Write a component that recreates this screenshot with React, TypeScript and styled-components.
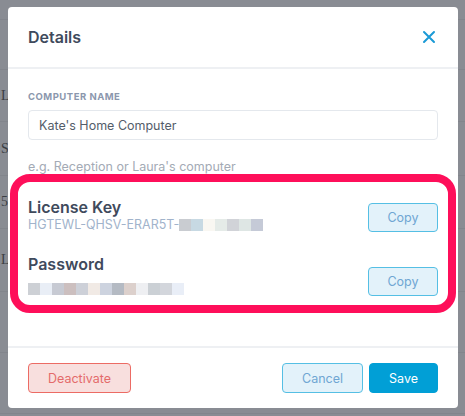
import React from "react";
import styled, { createGlobalStyle } from "styled-components";

const GlobalStyle = createGlobalStyle`
  html, body {
    margin: 0;
    padding: 0;
    width: 465px;
    height: 416px;
    overflow: hidden;
    font-family: Inter, "Noto Sans", Arial, sans-serif;
  }
`;

const Page = styled.div`
  position: relative;
  width: 465px;
  height: 416px;
  background: #898c93;
  overflow: hidden;
`;

const BgRow = styled.div<{ $h: number }>`
  height: ${(p) => p.$h}px;
  border-bottom: 1px solid #82858c;
  display: flex;
  align-items: center;
  font-family: "Liberation Serif", serif;
  font-size: 14px;
  color: #3b3e44;
  padding-left: 1px;
`;

const Modal = styled.div`
  position: absolute;
  left: 8px;
  top: 7px;
  width: 450px;
  height: 401px;
  background: #fff;
  border-radius: 4px;
  display: flex;
  flex-direction: column;
`;

const Header = styled.div`
  height: 60px;
  display: flex;
  align-items: center;
  justify-content: space-between;
  padding: 0 22px 0 20px;
  border-bottom: 2px solid #eef0f3;
  h1 {
    margin: 0;
    font-size: 16px;
    font-weight: 600;
    color: #3f4a5c;
  }
`;

const CloseBtn = styled.button`
  border: 0;
  background: none;
  padding: 0;
  width: 14px;
  height: 14px;
  display: flex;
  cursor: pointer;
`;

const Body = styled.div`
  flex: 1;
  padding: 22px 20px 0 20px;
  display: flex;
  flex-direction: column;
`;

const Label = styled.label`
  font-size: 9.5px;
  font-weight: 700;
  letter-spacing: 0.5px;
  color: #8b97ad;
  text-transform: uppercase;
  margin-bottom: 8px;
`;

const Input = styled.input`
  height: 30px;
  box-sizing: border-box;
  border: 1px solid #e4e8ed;
  border-radius: 4px;
  padding: 0 10px;
  font-family: inherit;
  font-size: 12.5px;
  color: #545d6a;
  outline: none;
`;

const Hint = styled.div`
  margin-top: 19px;
  font-size: 12.5px;
  color: #a3aab5;
`;

const Highlight = styled.div`
  margin: 0 -18px 0 -18px;
  border: 8px solid #fe0f5a;
  border-radius: 20px;
  padding: 15px 10px 9px 10px;
  display: flex;
  flex-direction: column;
  gap: 22px;
`;

const SecretRow = styled.div`
  display: flex;
  align-items: flex-end;
  justify-content: space-between;
`;

const SecretInfo = styled.div`
  display: flex;
  flex-direction: column;
`;

const SecretTitle = styled.div`
  font-size: 16px;
  font-weight: 600;
  color: #3f4a5c;
  line-height: 20px;
`;

const SecretValue = styled.div<{ $offset?: number }>`
  display: flex;
  align-items: center;
  height: 15px;
  margin-top: ${(p) => p.$offset ?? 0}px;
  font-size: 12.5px;
  color: #a1b3cb;
`;

const Pixel = styled.span<{ $c: string }>`
  display: inline-block;
  width: 12px;
  height: 12px;
  background: ${(p) => p.$c};
`;

const Button = styled.button<{ $variant: "soft" | "danger" | "primary" }>`
  height: 30px;
  box-sizing: border-box;
  border-radius: 4px;
  font-family: inherit;
  font-size: 12.5px;
  padding: 0 19px;
  cursor: pointer;
  border: 1px solid
    ${(p) =>
      p.$variant === "danger" ? "#ec6b64" : p.$variant === "primary" ? "#019fd6" : "#55bfe4"};
  background: ${(p) =>
    p.$variant === "danger" ? "#f8dfde" : p.$variant === "primary" ? "#019fd6" : "#e3f2fa"};
  color: ${(p) =>
    p.$variant === "danger" ? "#e46b6b" : p.$variant === "primary" ? "#ffffff" : "#6fa6d3"};
`;

const CopyButton = styled(Button)`
  width: 70px;
  height: 29px;
  padding: 0;
`;

const Footer = styled.div`
  height: 60px;
  border-top: 2px solid #eef0f3;
  display: flex;
  align-items: center;
  padding: 0 20px;
  gap: 6px;
`;

const Spacer = styled.div`
  flex: 1;
`;

const keyPixels = ["#c9ccd1", "#c7d9e3", "#f9f7f2", "#e5ebe8", "#d1d3d8", "#dee6e4", "#c5cad7"];
const pwPixels = [
  "#cdd0d5", "#e9eef6", "#c7cad3", "#ccbfbf", "#cdd0d8", "#f1eae5", "#cdd3df",
  "#b4bac3", "#dcd0cc", "#eeeff2", "#cbd0d5", "#d3d6dc", "#e9eef7",
];

const bgRows: [string, number][] = [
  ["", 19],
  ["", 49],
  ["LM", 51],
  ["SC", 53],
  ["57", 52],
  ["LL", 62],
  ["", 60],
  ["", 60],
];

export default function App() {
  return (
    <Page>
      <GlobalStyle />
      {bgRows.map(([t, h], i) => (
        <BgRow key={i} $h={h}>
          {t}
        </BgRow>
      ))}
      <Modal>
        <Header>
          <h1>Details</h1>
          <CloseBtn aria-label="Close">
            <svg width="14" height="14" viewBox="0 0 14 14">
              <path d="M2 2 L12 12 M12 2 L2 12" stroke="#1b9ad6" strokeWidth="2" strokeLinecap="round" />
            </svg>
          </CloseBtn>
        </Header>
        <Body>
          <Label>Computer Name</Label>
          <Input defaultValue="Kate's Home Computer" />
          <Hint>e.g. Reception or Laura's computer</Hint>
          <Highlight>
            <SecretRow>
              <SecretInfo>
                <SecretTitle>License Key</SecretTitle>
                <SecretValue>
                  HGTEWL-QHSV-ERAR5T-
                  {keyPixels.map((c, i) => (
                    <Pixel key={i} $c={c} />
                  ))}
                </SecretValue>
              </SecretInfo>
              <CopyButton $variant="soft">Copy</CopyButton>
            </SecretRow>
            <SecretRow>
              <SecretInfo>
                <SecretTitle>Password</SecretTitle>
                <SecretValue $offset={7}>
                  {pwPixels.map((c, i) => (
                    <Pixel key={i} $c={c} />
                  ))}
                </SecretValue>
              </SecretInfo>
              <CopyButton $variant="soft">Copy</CopyButton>
            </SecretRow>
          </Highlight>
        </Body>
        <Footer>
          <Button $variant="danger">Deactivate</Button>
          <Spacer />
          <Button $variant="soft">Cancel</Button>
          <Button $variant="primary">Save</Button>
        </Footer>
      </Modal>
    </Page>
  );
}
